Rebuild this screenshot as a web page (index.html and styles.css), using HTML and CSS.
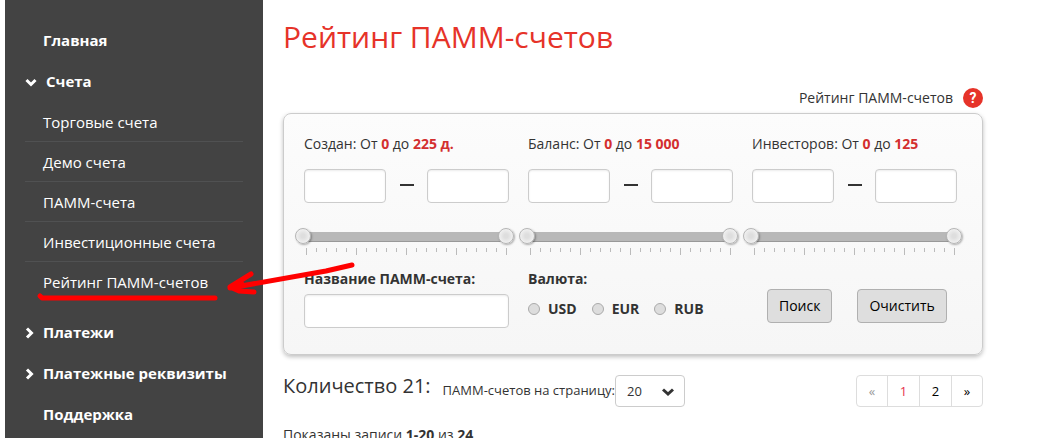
FILE: index.html
```html
<!DOCTYPE html>
<html lang="ru">
<head>
    <meta charset="UTF-8">
    <meta name="viewport" content="width=device-width, initial-scale=1.0">
    <title>Рейтинг ПАММ-счетов</title>
    <link rel="stylesheet" href="styles.css">
</head>
<body>
    <div class="page">
        <nav class="sidebar">
            <ul class="menu">
                <li><a href="#">Главная</a></li>
                <li>
                    <a href="#" class="open">
                        <svg class="chevron" viewBox="0 0 12 12"><path d="M1.500 4L6 8.500L10.500 4"/></svg>
                        Счета
                    </a>
                    <ul class="submenu">
                        <li><a href="#">Торговые счета</a></li>
                        <li><a href="#">Демо счета</a></li>
                        <li><a href="#">ПАММ-счета</a></li>
                        <li><a href="#">Инвестиционные счета</a></li>
                        <li><a href="#">Рейтинг ПАММ-счетов</a></li>
                    </ul>
                </li>
                <li>
                    <a href="#">
                        <svg class="chevron" viewBox="0 0 12 12"><path d="M2 1.500L6.500 6L2 10.500"/></svg>
                        Платежи
                    </a>
                </li>
                <li>
                    <a href="#">
                        <svg class="chevron" viewBox="0 0 12 12"><path d="M2 1.500L6.500 6L2 10.500"/></svg>
                        Платежные реквизиты
                    </a>
                </li>
                <li><a href="#">Поддержка</a></li>
            </ul>
        </nav>

        <main class="content">
            <h1>Рейтинг ПАММ-счетов</h1>

            <div class="help">
                <span>Рейтинг ПАММ-счетов</span>
                <button type="button" class="help-btn">?</button>
            </div>

            <form class="filter">
                <div class="filter-row">
                    <div class="range">
                        <p class="range-title">Создан: От <b>0</b> до <b>225 д.</b></p>
                        <div class="range-inputs">
                            <input type="text" aria-label="Создан от">
                            <span class="dash"></span>
                            <input type="text" aria-label="Создан до">
                        </div>
                        <div class="slider">
                            <input type="range" min="0" max="225" value="0" aria-label="Создан от">
                            <input type="range" min="0" max="225" value="225" aria-label="Создан до">
                        </div>
                        <div class="ticks"></div>
                    </div>
                    <div class="range">
                        <p class="range-title">Баланс: От <b>0</b> до <b>15 000</b></p>
                        <div class="range-inputs">
                            <input type="text" aria-label="Баланс от">
                            <span class="dash"></span>
                            <input type="text" aria-label="Баланс до">
                        </div>
                        <div class="slider">
                            <input type="range" min="0" max="15000" value="0" aria-label="Баланс от">
                            <input type="range" min="0" max="15000" value="15000" aria-label="Баланс до">
                        </div>
                        <div class="ticks"></div>
                    </div>
                    <div class="range">
                        <p class="range-title">Инвесторов: От <b>0</b> до <b>125</b></p>
                        <div class="range-inputs">
                            <input type="text" aria-label="Инвесторов от">
                            <span class="dash"></span>
                            <input type="text" aria-label="Инвесторов до">
                        </div>
                        <div class="slider">
                            <input type="range" min="0" max="125" value="0" aria-label="Инвесторов от">
                            <input type="range" min="0" max="125" value="125" aria-label="Инвесторов до">
                        </div>
                        <div class="ticks"></div>
                    </div>
                </div>

                <div class="filter-row filter-bottom">
                    <div>
                        <label class="field-title" for="name">Название ПАММ-счета:</label>
                        <input type="text" id="name">
                    </div>
                    <div>
                        <div class="field-title">Валюта:</div>
                        <div class="radios">
                            <label><input type="radio" name="currency" value="USD">USD</label>
                            <label><input type="radio" name="currency" value="EUR">EUR</label>
                            <label><input type="radio" name="currency" value="RUB">RUB</label>
                        </div>
                    </div>
                    <div class="buttons">
                        <button type="button">Поиск</button>
                        <button type="reset">Очистить</button>
                    </div>
                </div>
            </form>

            <div class="list-bar">
                <h2>Количество 21:</h2>
                <label for="perPage">ПАММ-счетов на страницу:</label>
                <div class="select">
                    <select id="perPage">
                        <option>20</option>
                        <option>50</option>
                        <option>100</option>
                    </select>
                    <svg viewBox="0 0 12 12"><path d="M1 3.500L6 8L11 3.500"/></svg>
                </div>
                <div class="pager">
                    <a href="#" class="disabled">«</a>
                    <a href="#" class="active">1</a>
                    <a href="#">2</a>
                    <a href="#">»</a>
                </div>
            </div>

            <p class="summary">Показаны записи <b>1-20</b> из <b>24</b></p>
        </main>

        <!-- hand-drawn pointer to the current menu item -->
        <svg class="pointer" width="330" height="50" viewBox="0 0 330 50">
            <path d="M4 36L6 38L179 38" />
            <path d="M316 5L290 11L194 28M215 14L194 27L203 31L218 32M194 28L206 24" />
        </svg>
    </div>

    <script>
        // 21 marks under every slider
        document.querySelectorAll('.ticks').forEach(function(ticks) {
            for (let i = 0; i < 21; i++) {
                ticks.appendChild(document.createElement('i'));
            }
        });
    </script>
</body>
</html>
```
FILE: styles.css
```css
* {
    box-sizing: border-box;
}
body {
    margin: 0;
    background: #fff;
    color: #333;
    font-family: "Open Sans", sans-serif;
    font-size: 14px;
    line-height: 20px;
    overflow: hidden;
}
a {
    text-decoration: none;
}
h1, h2, p, ul {
    margin: 0;
    padding: 0;
}
.page {
    position: relative;
    display: flex;
    height: 100vh;
    padding-left: 5px;
}

/* left menu */
.sidebar {
    flex: 0 0 258px;
    padding: 20px 20px 0;
    background: #434343;
}
.menu, .submenu {
    list-style: none;
}
.menu a {
    position: relative;
    display: block;
    height: 41px;
    padding-left: 18px;
    color: #fff;
    font-size: 15px;
    font-weight: 700;
    line-height: 41px;
}
.menu .open {
    padding-left: 21px;
}
.chevron {
    position: absolute;
    top: 15px;
    left: 0;
    width: 12px;
    height: 12px;
}
.chevron path, .select path {
    fill: none;
    stroke: #fff;
    stroke-width: 3;
}
.submenu {
    padding-bottom: 10px;
}
.submenu a {
    height: 40px;
    border-bottom: 1px solid #505152;
    font-weight: 400;
    line-height: 40px;
}
.submenu li:last-child a {
    border-bottom: none;
}

/* content */
.content {
    flex: 1;
    padding: 17px 63px 0 20px;
}
h1 {
    color: #e63329;
    font-size: 30px;
    font-weight: 400;
    line-height: 40px;
}
.help {
    display: flex;
    justify-content: flex-end;
    align-items: center;
    gap: 10px;
    margin-top: 31px;
}
.help-btn {
    width: 20px;
    height: 20px;
    padding: 0;
    border: none;
    border-radius: 50%;
    background: #e63329;
    color: #fff;
    font: 700 14px/20px Roboto, sans-serif;
}
.filter {
    margin-top: 5px;
    padding: 20px 25px 26px 20px;
    border: 1px solid #ccc;
    border-radius: 8px;
    background: linear-gradient(#fcfcfc, #f6f6f6);
    box-shadow: 0 2px 4px rgba(0, 0, 0, 0.25);
}
.filter-row {
    display: grid;
    grid-template-columns: repeat(3, 1fr);
    gap: 19px;
}
.range-title b {
    color: #d32f2f;
}
.range-inputs {
    display: flex;
    justify-content: space-between;
    align-items: center;
    margin-top: 15px;
}
input[type="text"] {
    display: block;
    width: 100%;
    height: 34px;
    border: 1px solid #ccc;
    border-radius: 4px;
    background: #fff;
    box-shadow: inset 0 1px 2px rgba(0, 0, 0, 0.08);
}
.range-inputs input[type="text"] {
    width: 40%;
}
.dash {
    width: 14px;
    height: 2px;
    margin-bottom: 2px;
    background: #333;
}
.slider {
    position: relative;
    height: 10px;
    margin-top: 29px;
    background: #b8b8b8;
    border-bottom: 1px solid #999;
}
.slider input {
    position: absolute;
    top: -4px;
    left: -9px;
    width: calc(100% + 14px);
    height: 16px;
    margin: 0;
    background: none;
    appearance: none;
    pointer-events: none;
}
.slider input::-webkit-slider-thumb {
    width: 16px;
    height: 16px;
    border: 1px solid #b5b5b5;
    border-radius: 50%;
    background: radial-gradient(circle, #dedede 20%, #f2f2f2 75%);
    box-shadow: 1px 1px 2px rgba(0, 0, 0, 0.3);
    appearance: none;
    pointer-events: auto;
}
.ticks {
    display: flex;
    justify-content: space-between;
    height: 7px;
    margin: 6px 2px 0;
}
.ticks i {
    width: 1px;
    height: 4px;
    background: #bbb;
}
.ticks i:nth-child(5n + 1) {
    height: 7px;
}
.filter-bottom {
    margin-top: 14px;
}
.field-title {
    display: block;
    font-weight: 700;
}
#name {
    margin-top: 5px;
}
.radios {
    display: flex;
    gap: 15px;
    margin-top: 10px;
}
.radios label {
    display: flex;
    align-items: center;
    font-weight: 700;
}
.radios input {
    width: 12px;
    height: 12px;
    margin: 0 8px 0 0;
    border: 1px solid #aaa;
    border-radius: 50%;
    background: #ddd;
    appearance: none;
}
.radios input:checked {
    background: #666;
}
.buttons {
    display: flex;
    gap: 25px;
    padding: 20px 0 0 15px;
}
.buttons button {
    height: 34px;
    padding: 0 11px;
    border: 1px solid #b0b0b0;
    border-radius: 4px;
    background: #dedede;
    color: #000;
    font: inherit;
}

/* list header */
.list-bar {
    display: flex;
    align-items: center;
    margin-top: 20px;
}
h2 {
    margin: 0 12px 10px 0;
    font-size: 20px;
    font-weight: 400;
    line-height: 22px;
}
.list-bar label {
    margin-bottom: 2px;
    font-size: 13px;
}
.select {
    position: relative;
}
.select select {
    width: 70px;
    height: 32px;
    padding: 0 11px;
    border: 1px solid #ccc;
    border-radius: 4px;
    background: #fff;
    color: #333;
    font: 13px "Open Sans", sans-serif;
    appearance: none;
}
.select svg {
    position: absolute;
    top: 11px;
    right: 11px;
    width: 12px;
    height: 12px;
    pointer-events: none;
}
.select path {
    stroke: #333;
}
.pager {
    display: flex;
    margin-left: auto;
    border: 1px solid #ddd;
    border-radius: 4px;
}
.pager a {
    width: 32px;
    height: 30px;
    border-left: 1px solid #ddd;
    color: #000;
    font-size: 13px;
    line-height: 30px;
    text-align: center;
}
.pager a:first-child {
    width: 30px;
    border-left: none;
}
.pager a:last-child {
    width: 31px;
}
.pager .disabled {
    color: #999;
}
.pager .active {
    color: #e6334c;
}
.summary {
    margin-top: 18px;
}

/* marker lines */
.pointer {
    position: absolute;
    top: 260px;
    left: 36px;
    pointer-events: none;
}
.pointer path {
    fill: none;
    stroke: #f00;
    stroke-width: 5;
    stroke-linecap: round;
    stroke-linejoin: round;
}
```
